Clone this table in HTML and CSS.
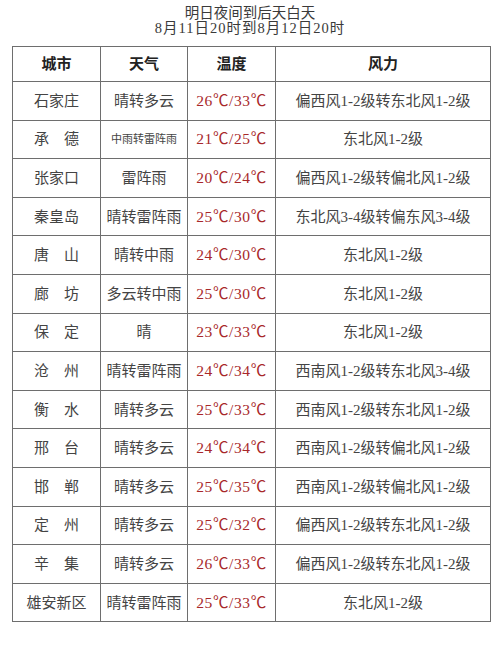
FILE: index.html
```html
<!DOCTYPE html>
<html lang="zh">
<head>
<meta charset="utf-8">
<title>天气预报</title>
<link rel="stylesheet" href="styles.css">
</head>
<body>
<div class="page">
  <div class="title">
    <div class="title-line">明日夜间到后天白天</div>
    <div class="title-line wide">8月11日20时到8月12日20时</div>
  </div>
  <table class="wx">
    <colgroup>
      <col class="c-city"><col class="c-wx"><col class="c-temp"><col class="c-wind">
    </colgroup>
    <thead>
      <tr><th>城市</th><th>天气</th><th>温度</th><th>风力</th></tr>
    </thead>
    <tbody>
      <tr><td>石家庄</td><td>晴转多云</td><td class="t">26℃/33℃</td><td>偏西风1-2级转东北风1-2级</td></tr>
      <tr><td>承　德</td><td class="small">中雨转雷阵雨</td><td class="t">21℃/25℃</td><td>东北风1-2级</td></tr>
      <tr><td>张家口</td><td>雷阵雨</td><td class="t">20℃/24℃</td><td>偏西风1-2级转偏北风1-2级</td></tr>
      <tr><td>秦皇岛</td><td>晴转雷阵雨</td><td class="t">25℃/30℃</td><td>东北风3-4级转偏东风3-4级</td></tr>
      <tr><td>唐　山</td><td>晴转中雨</td><td class="t">24℃/30℃</td><td>东北风1-2级</td></tr>
      <tr><td>廊　坊</td><td>多云转中雨</td><td class="t">25℃/30℃</td><td>东北风1-2级</td></tr>
      <tr><td>保　定</td><td>晴</td><td class="t">23℃/33℃</td><td>东北风1-2级</td></tr>
      <tr><td>沧　州</td><td>晴转雷阵雨</td><td class="t">24℃/34℃</td><td>西南风1-2级转东北风3-4级</td></tr>
      <tr><td>衡　水</td><td>晴转多云</td><td class="t">25℃/33℃</td><td>西南风1-2级转东北风1-2级</td></tr>
      <tr><td>邢　台</td><td>晴转多云</td><td class="t">24℃/34℃</td><td>西南风1-2级转偏北风1-2级</td></tr>
      <tr><td>邯　郸</td><td>晴转多云</td><td class="t">25℃/35℃</td><td>西南风1-2级转偏北风1-2级</td></tr>
      <tr><td>定　州</td><td>晴转多云</td><td class="t">25℃/32℃</td><td>偏西风1-2级转东北风1-2级</td></tr>
      <tr><td>辛　集</td><td>晴转多云</td><td class="t">26℃/33℃</td><td>偏西风1-2级转东北风1-2级</td></tr>
      <tr><td>雄安新区</td><td>晴转雷阵雨</td><td class="t">25℃/33℃</td><td>东北风1-2级</td></tr>
    </tbody>
  </table>
</div>
</body>
</html>
```
FILE: styles.css
```css
html, body {
  margin: 0;
  padding: 0;
  background: #ffffff;
}
body {
  width: 500px;
  height: 646px;
  overflow: hidden;
  font-family: "Liberation Serif", "Noto Sans CJK SC", serif;
  color: #444444;
}
.page {
  padding-top: 6px;
}
.title {
  text-align: center;
  font-size: 14.5px;
  line-height: 15px;
  color: #3a3a3a;
}
.title-line.wide {
  letter-spacing: 1px;
}
.wx {
  margin: 10px 0 0 12px;
  width: 478px;
  border-collapse: collapse;
  table-layout: fixed;
}
.c-city { width: 88px; }
.c-wx { width: 87px; }
.c-temp { width: 88px; }
.c-wind { width: 215px; }
.wx th, .wx td {
  border: 1px solid #6e6e6e;
  padding: 0;
  text-align: center;
  font-size: 15px;
  line-height: 18px;
  white-space: nowrap;
}
.wx th {
  height: 34px;
  font-weight: bold;
  color: #222222;
}
.wx td {
  height: 37.6px;
}
.wx td.t {
  color: #a8282a;
  font-size: 15.5px;
  letter-spacing: 0.6px;
}
.wx td.small {
  font-size: 11px;
}
```
